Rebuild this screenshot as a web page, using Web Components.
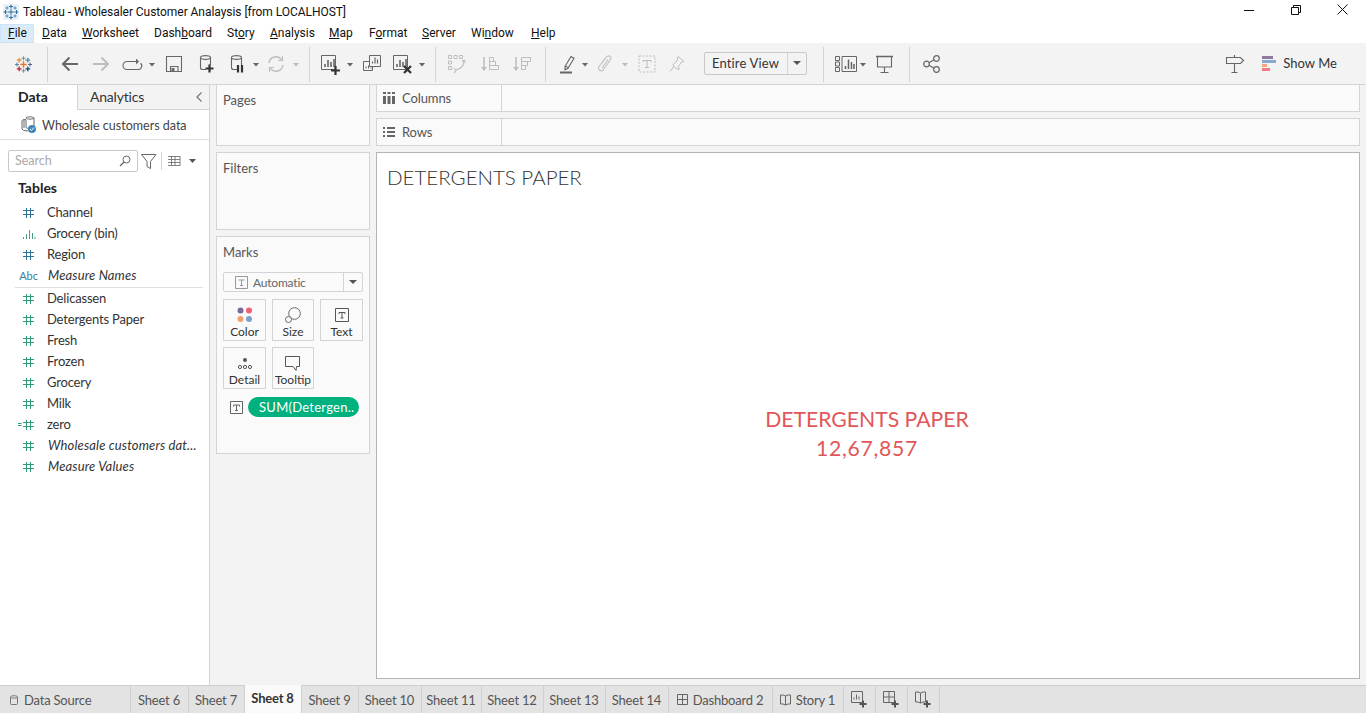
<!DOCTYPE html>
<html><head><meta charset="utf-8"><style>
html,body{margin:0;padding:0;height:100%;overflow:hidden;background:#fff}
body{font-family:"Lato","Open Sans",sans-serif;color:#333}
</style></head><body>
<tableau-app></tableau-app>
<script>
const G='#666', L='#bdbdbd';
const cyl=(c=G)=>`<path d="M1.500 3.500C1.500 1 11.500 1 11.500 3.500V11M1.500 3.500C1.500 6 11.500 6 11.500 3.500M1.500 3.500V13.500Q1.500 15.500 3.500 15.500H7" fill="none" stroke="${c}" stroke-width="1.100"/>`;
const chartBox=(x,y,w,h,c=G)=>`<path d="M${x+.5} ${y+.5}h${w-1}v${h-1}h-${w-1}z" fill="none" stroke="${c}"/><path d="M${x+4} ${y+h-3}v-3M${x+7} ${y+h-3}v-7M${x+10} ${y+h-3}v-5M${x+13} ${y+h-3}v-8" stroke="${c}" stroke-width="1.600" fill="none"/>`;
const lp=(x,y,s,c,w=1.1)=>`<path d="M${x-s} ${y}h${2*s}M${x} ${y-s}v${2*s}" stroke="${c}" fill="none" stroke-width="${w}"/>`;
const ICONS={
 logo:[17,17,lp(8.5,8.5,3.2,'#e8762b',1.4)+lp(8.5,2.2,2,'#7099a6')+lp(8.5,14.8,2,'#7099a6')+lp(2,8.5,2,'#59879b')+lp(15,8.5,2,'#5b6591')+lp(4.2,4.2,2.4,'#eb9129',1.3)+lp(12.8,4.2,2.4,'#59879b',1.3)+lp(4.2,12.8,2.4,'#c72037',1.3)+lp(12.8,12.800,2.4,'#1f447b',1.3)],
 snow:[16,16,`<rect width="16" height="16" fill="#eaf2f8"/>`+lp(8,8,3,'#2a6c9e',1)+lp(8,2.5,2,'#2a6c9e',1)+lp(8,13.5,2,'#2a6c9e',1)+lp(2.5,8,2,'#2a6c9e',1)+lp(13.5,8,2,'#2a6c9e',1)+lp(4,4,1.6,'#4a8cbe',1)+lp(12,4,1.6,'#4a8cbe',1)+lp(4,12,1.6,'#4a8cbe',1)+lp(12,12,1.6,'#4a8cbe',1)],
 back:[18,16,`<path d="M17 8H2M8.500 1.500L2 8l6.500 6.500" fill="none" stroke="${G}" stroke-width="2"/>`],
 fwd:[18,16,`<path d="M1 8H16M9.500 1.500L16 8l-6.500 6.500" fill="none" stroke="${L}" stroke-width="2"/>`],
 loop:[19,12,`<path d="M13 3.500H4a4 4 0 0 0 0 8h11a3.500 3.500 0 0 0 2.500-6.200" fill="none" stroke="${G}" stroke-width="1.100"/><path d="M13 .5l3 3-3 3z" fill="${G}"/>`],
 save:[16,16,`<path d="M.5 .5h15v15H.5z" fill="none" stroke="${G}" stroke-width="1.100"/><path d="M4.500 15.500v-5h7.500v5" fill="none" stroke="${G}" stroke-width="1.100"/><path d="M5.500 12h3v3h-3z" fill="${G}"/>`],
 dsadd:[15,20,cyl()+`<path d="M6.500 14.500H14.500M10.500 10.500V18.500" stroke="#333" stroke-width="2.200" fill="none"/>`],
 dspause:[15,20,cyl()+`<path d="M8 11v7.500M12 11v7.500" stroke="#333" stroke-width="2.200" fill="none"/>`],
 refresh:[18,18,`<path d="M2 8a7 7 0 0 1 12.500-3.500M16 10a7 7 0 0 1-12.500 3.500" fill="none" stroke="${L}" stroke-width="1.400"/><path d="M15.500 1v4.500H11M2.500 17v-4.500H7" fill="none" stroke="${L}" stroke-width="1.200"/>`],
 chartadd:[22,22,chartBox(1,2,15,15)+`<path d="M11 17.500h9M15.500 13v9" stroke="#333" stroke-width="2.200" fill="none"/>`],
 dup:[20,20,`<path d="M7.500 1.500h11v11h-11z" fill="#f3f3f3" stroke="${G}"/><path d="M10.500 9.500v-2M13 9.500v-6M15.500 9.500v-4" stroke="${G}" stroke-width="1.200"/><path d="M1.500 7.500h6M1.500 7.500v9h9v-4" fill="none" stroke="${G}"/><path d="M4 14.500v-2M6.500 14.500v-3M9 14.500v-1" stroke="${G}"/>`],
 clear:[22,22,chartBox(1,2,15,15)+`<path d="M12 13l7 7M19 13l-7 7" stroke="#333" stroke-width="2.200" fill="none"/>`],
 swap:[20,20,`<path d="M1.500 1.500h3v3h-3zM7 1.500h3v3H7zM12.500 1.500h3v3h-3zM1.500 7h3v3h-3zM1.500 12.500h3v3h-3z" fill="none" stroke="${L}"/><path d="M17 6q1 7-8 10M7 14l2 2.500-2 2.500M18.500 8l-1.500-2-2 1.500" fill="none" stroke="${L}" stroke-width="1.200"/>`],
 sorta:[20,20,`<path d="M4 3v13" stroke="${L}" stroke-width="1.500"/><path d="M1 13h6l-3 4z" fill="${L}"/><path d="M9.500 3.500h4v4h-4zM9.500 7.500h6v4h-6zM9.500 11.500h9v4h-9z" fill="none" stroke="${L}"/>`],
 sortd:[20,20,`<path d="M4 3v13" stroke="${L}" stroke-width="1.500"/><path d="M1 13h6l-3 4z" fill="${L}"/><path d="M9.500 3.500h9v4h-9zM9.500 7.500h6v4h-6zM9.500 11.500h4v4h-4z" fill="none" stroke="${L}"/>`],
 pen:[18,20,`<path d="M6 12.500L12 2.500l3 1.800-6 10-3 1.500zM6.500 12l2.600 1.600" fill="none" stroke="${G}" stroke-width="1.100"/><rect x="1" y="17.500" width="12" height="2" fill="${G}"/>`],
 clip:[18,20,`<path d="M5.500 9.500L10.500 3a2.300 2.300 0 0 1 4 2.500L7.500 15.500a2.700 2.700 0 0 1-4.500-3L9 4.500M6 14l6-8.500" fill="none" stroke="${L}" stroke-width="1.100"/>`],
 tdash:[18,18,`<path d="M1 1h16v16H1z" fill="none" stroke="${L}" stroke-dasharray="2 1.500"/><path d="M5 5.500h8M9 5.500v7M7 12.500h4M5 5.500v1.500M13 5.500v1.500" fill="none" stroke="${L}"/>`],
 pin:[18,18,`<path d="M10 1.500l6 5-2.500.500-3 4.500.500 3-2.500-.500-3-3L5 9.500l4-3.500z" fill="none" stroke="${L}"/><path d="M6 11.500l-4 5" stroke="${L}"/>`],
 sm:[22,18,`<path d="M.5 1.500h4v4h-4zM.5 7h4v4h-4zM.5 12.500h4v4h-4zM7 1.500h14.500v15H7z" fill="none" stroke="${G}"/><path d="M10.500 14v-3M13.500 14V4.500M16.500 14V7M19 14v-5" stroke="${G}" stroke-width="1.500"/>`],
 present:[18,18,`<path d="M0 1.500h17" stroke="${G}" stroke-width="1.500"/><path d="M1.500 1.500v10.500h14V1.500M8.500 12v5M4.500 17.500h8" fill="none" stroke="${G}" stroke-width="1.100"/>`],
 share:[18,18,`<circle cx="3.500" cy="9" r="2.800" fill="none" stroke="${G}" stroke-width="1.200"/><circle cx="13.500" cy="3.500" r="2.800" fill="none" stroke="${G}" stroke-width="1.200"/><circle cx="13.500" cy="14.500" r="2.800" fill="none" stroke="${G}" stroke-width="1.200"/><path d="M6 7.700l5-3M6 10.300l5 3" stroke="${G}" stroke-width="1.200"/>`],
 sign:[20,20,`<path d="M1.500 3.500H15.500L18.500 6.500 15.500 9.500H1.500zM9.500 1v2.500M9.500 9.500V18M6.500 18.500h6" fill="none" stroke="${G}" stroke-width="1.100"/>`],
 showme:[14,16,`<rect x="0" y="0" width="11" height="3" fill="#8e7ba0"/><rect x="0" y="4" width="14" height="3" fill="#88a8d0"/><rect x="0" y="8" width="5" height="3" fill="#f0a878"/><rect x="0" y="12" width="8" height="3" fill="#f57a85"/>`],
 min:[12,12,`<path d="M0 6.500h10" stroke="#111"/>`],
 max:[12,12,`<path d="M.5 3.500h7v7h-7zM2.500 3.500v-2h7v7h-2" fill="none" stroke="#111"/>`],
 close:[12,12,`<path d="M.5 .5l10 10M10.500 .5l-10 10" stroke="#111" fill="none"/>`],
 hash:[12,12,`<path d="M3.500 1v10M7.500 1v10M0 3.500h11M0 7.500h11" stroke="var(--c,#3a7d9c)" fill="none"/>`],
 hash2:[17,12,`<path d="M8.500 1v10M12.500 1v10M5 3.500h11M5 7.500h11M0 4.500h3.500M0 6.500h3.500" stroke="var(--c,#3a9d7c)" fill="none"/>`],
 bin:[14,12,`<path d="M1.500 9v2M4.500 6v5M7.500 2v9M10.500 5v6M13 9v2" stroke="#46a07e" fill="none"/>`],
 search:[12,12,`<circle cx="7.500" cy="4.500" r="3.500" fill="none" stroke="${G}"/><path d="M5 7L1 11" stroke="${G}" stroke-width="1.300"/>`],
 filter:[16,15,`<path d="M.5 .5h14.500L9.500 7.500v7l-3.500-2V7.500z" fill="none" stroke="${G}"/>`],
 cols:[12,12,`<path d="M0 0h3v2H0zM4.500 0h3v2h-3zM9 0h3v2H9zM0 4h3v8H0zM4.500 4h3v8h-3zM9 4h3v8H9z" fill="#666"/>`],
 rows:[12,10,`<path d="M0 0h2v2H0zM0 4h2v2H0zM0 8h2v2H0zM4 0h8v2H4zM4 4h8v2H4zM4 8h8v2H4z" fill="#666"/>`],
 list:[12,10,`<path d="M0 .5h12M0 3.500h12M0 6.500h12M0 9.500h12M3.500 0v10M7 0v10M12 0v10" stroke="${G}" fill="none" stroke-width=".8"/>`],
 ds:[18,18,`<path d="M7 2c0-1.500 8-1.500 8 0v8M7 2c0 1.500 8 1.500 8 0" fill="none" stroke="${G}"/><path d="M3 5v8q0 2 6 2M3 5c0-1 2-1.500 4-1.500M5 3v9" fill="none" stroke="${G}"/><path d="M7 4v7q0 2 6 1" fill="none" stroke="${G}"/><circle cx="13" cy="13" r="4" fill="#3f87b8"/><path d="M11 13l1.500 1.500L15 11.500" stroke="#fff" fill="none"/>`],
 t:[13,13,`<path d="M.5 .5h12v12H.5z" fill="none" stroke="${G}"/><path d="M3.500 4h6M6.500 4v5.500M5 9.500h3M3.500 4v1.500M9.500 4v1.500" fill="none" stroke="${G}"/>`],
 tlight:[13,13,`<path d="M.5 .5h12v12H.5z" fill="none" stroke="#999"/><path d="M3.500 4h6M6.500 4v5.500M5 9.500h3" fill="none" stroke="#999"/>`],
 color:[16,16,`<circle cx="3.500" cy="3.500" r="3" fill="#7d6a96"/><circle cx="12" cy="3.500" r="3" fill="#ef5f75"/><circle cx="3.500" cy="12" r="3" fill="#f0a070"/><circle cx="12" cy="12" r="3" fill="#7aa0cc"/>`],
 size:[16,16,`<circle cx="9.500" cy="6.500" r="5.800" fill="#fafafa" stroke="${G}"/><circle cx="3.500" cy="12.500" r="3" fill="#fafafa" stroke="${G}"/>`],
 text:[14,14,`<path d="M.5 .5h13v13H.5z" fill="none" stroke="#555"/><path d="M4 4.500h6M7 4.500V10M5.500 10h3M4 4.500V6M10 4.500V6" fill="none" stroke="#555"/>`],
 detail:[14,14,`<circle cx="7" cy="4" r="2" fill="#555"/><circle cx="2" cy="11" r="1.600" fill="none" stroke="#555"/><circle cx="7" cy="11" r="1.600" fill="none" stroke="#555"/><circle cx="12" cy="11" r="1.600" fill="none" stroke="#555"/>`],
 tip:[16,15,`<path d="M.5 .5h14v10h-3l-.5 4-3-4H.5z" fill="none" stroke="#555"/>`],
 cyl:[8,10,`<path d="M.5 2C.5 .3 7.500 .3 7.500 2V8.500q0 1-1 1h-5q-1 0-1-1zM.5 2C.5 3.500 7.500 3.500 7.500 2" fill="none" stroke="#777"/>`],
 dash:[11,11,`<path d="M.5 .5h10v10H.5zM5.500 .5v10M.5 5.500h10" fill="none" stroke="#666"/>`],
 book:[11,11,`<path d="M5.500 2Q3 .5 .5 1v9q2.500-.500 5 1 2.500-1.500 5-1V1Q8 .5 5.500 2zM5.500 2v9" fill="none" stroke="#666"/>`],
 newsheet:[16,17,`<path d="M.5 .5h11v11H.5z" fill="none" stroke="#666"/><path d="M3 8.500V6.500M5.500 8.500v-5M8 8.500v-3" stroke="#666"/><path d="M8.500 13h7M12 9.500v7" stroke="#555" stroke-width="2" fill="none"/>`],
 newdash:[16,17,`<path d="M.5 .5h11v11H.5zM6 .5v11M.5 6h11" fill="none" stroke="#666"/><path d="M8.500 13h7M12 9.500v7" stroke="#555" stroke-width="2" fill="none"/>`],
 newstory:[16,17,`<path d="M5.500 2Q3 .5 .5 1v10q2.500-.500 5 1 2.500-1.500 5-1V1Q8 .5 5.500 2zM5.500 2v10" fill="none" stroke="#666"/><path d="M8.500 13h7M12 9.500v7" stroke="#555" stroke-width="2" fill="none"/>`],
};
class TIcon extends HTMLElement{
 connectedCallback(){
  const [w,h,b]=ICONS[this.getAttribute('n')];
  const r=this.shadowRoot||this.attachShadow({mode:'open'});
  r.innerHTML=`<style>:host{display:inline-flex;flex:none;line-height:0}svg{display:block;overflow:visible}</style><svg width="${w}" height="${h}" viewBox="0 0 ${w} ${h}">${b}</svg>`;
 }
}
customElements.define('t-icon',TIcon);
function def(name,css,html){
 customElements.define(name,class extends HTMLElement{constructor(){super();this.attachShadow({mode:'open'}).innerHTML=`<style>${css}</style>${typeof html==='function'?html(this):html}`}});
}
def('app-titlebar',`:host{display:flex;align-items:center;height:24px;background:#fff;font:12px/24px Roboto,sans-serif;color:#111}
t-icon{margin:0 4px 0 3px}.t{flex:1;white-space:nowrap;letter-spacing:-.05px}.b{display:flex}.b span{width:46px;display:flex;justify-content:center;align-items:center;height:20px;margin-top:-4px}`,
`<t-icon n="snow"></t-icon><div class="t">Tableau - Wholesaler Customer Analaysis [from LOCALHOST]</div><div class="b"><span style="margin-right:1px"><t-icon n="min"></t-icon></span><span><t-icon n="max"></t-icon></span><span><t-icon n="close"></t-icon></span></div>`);
const menus=[['File','F',34],['Data','D',40],['Worksheet','W',72],['Dashboard','b',73],['Story','o',43],['Analysis','A',59],['Map','M',40],['Format','o',53],['Server','S',49],['Window','n',60],['Help','H',38]];
def('app-menubar',`:host{display:flex;height:19px;background:#fff;font:12px/19px Roboto,sans-serif;color:#111}
div{padding-left:8px;box-sizing:border-box;white-space:nowrap}.on{background:#d9ebf9;box-shadow:inset 0 0 0 1px #cce4f7}u{text-underline-offset:1px}`,
menus.map((m,i)=>{const s=m[0];const k=s.indexOf(m[1]);return `<div class="${i==0?'on':''}" style="width:${m[2]}px">${s.slice(0,k)}<u>${s[k]}</u>${s.slice(k+1)}</div>`}).join(''));
const bar=[['i','logo',23],['s',47],['i','back',70],['i','fwd',101],['i','loop',132],['c',152],['i','save',174],['i','dsadd',206],['i','dspause',237],['c',256],['i','refresh',276],['cl',296],['s',309],['i','chartadd',331],['c',350],['i','dup',372],['i','clear',403],['c',422],['s',435],['i','swap',457],['i','sorta',490],['i','sortd',522],['s',545],['i','pen',568],['c',585],['i','clip',605],['cl',625],['i','tdash',647],['i','pin',677],['f'],['s',823],['i','sm',846],['c',863],['i','present',885],['s',909],['i','share',932]];
let cx=0;
const barHtml=bar.map(b=>{
 if(b[0]==='f'){const h=`<tb-select style="margin-left:${704-cx}px">Entire View</tb-select>`;cx=807;return h}
 const kind=b[0],c=b[b.length-1];
 const w=kind==='i'?(ICONS[b[1]][0]):kind==='s'?1:7;
 const l=c-w/2;const m=l-cx;cx=l+w;
 if(kind==='i')return `<t-icon n="${b[1]}" style="margin-left:${m}px"></t-icon>`;
 if(kind==='s')return `<i class="sep" style="margin-left:${m}px"></i>`;
 return `<i class="car${kind==='cl'?' l':''}" style="margin-left:${m}px"></i>`;
}).join('');
const caret=`background:#555;clip-path:polygon(0 0,100% 0,50% 100%);flex:none;`;
def('tb-select',`:host{display:flex;flex:none;width:103px;height:23px;box-sizing:border-box;border:1px solid #c8c8c8;border-radius:2px;font:13px/21px Lato,sans-serif;color:#333;letter-spacing:.15px;margin-top:-2px}
.a{flex:1;padding-left:7px}.b{width:18px;border-left:1px solid #d4d4d4;display:flex;align-items:center;justify-content:center}.b i{width:8px;height:4px;${caret}}`,`<div class="a"><slot></slot></div><div class="b"><i></i></div>`);
def('app-toolbar',`:host{display:flex;align-items:center;height:41px;background:#f3f3f3;box-sizing:border-box;padding-top:1px;font:13px Lato,sans-serif;color:#333}
.sep{width:1px;height:35px;background:#d4d4d4;flex:none}.car{width:7px;height:4px;${caret}background:#666;margin-top:1px}.car.l{background:#bbb}.end{margin-left:auto;display:flex;align-items:center}
.sm{margin:-2px 29px 0 7px;font-size:13px;letter-spacing:.05px}`,
barHtml+`<div class="end"><t-icon n="sign"></t-icon><t-icon n="showme" style="margin-left:17px"></t-icon><span class="sm">Show Me</span></div>`);
def('side-tabs',`:host{display:flex;height:25px;font:14px/23px Lato,sans-serif;color:#333;box-sizing:border-box}
.d{width:77px;font-weight:700;padding-left:18px;box-sizing:border-box;background:#fff;color:#222}
.a{flex:1;background:#f3f3f3;border-left:1px solid #d4d4d4;border-bottom:1px solid #d4d4d4;padding-left:12px;display:flex;justify-content:space-between;height:25px;box-sizing:border-box;letter-spacing:-.2px}
svg{margin:7px 6px 0 0}`,`<div class="d">Data</div><div class="a"><span>Analytics</span><svg width="8" height="10"><path d="M6.500 .5L2 5l4.500 4.500" fill="none" stroke="#777" stroke-width="1.200"/></svg></div>`);
def('field-row',`:host{display:flex;align-items:center;height:21px;font:13px/21px Lato,sans-serif;color:#333;white-space:nowrap;letter-spacing:-.18px}
.i{width:47px;display:flex;justify-content:flex-end;box-sizing:border-box;padding-right:12px;flex:none}
.abc{font:11px Lato,sans-serif;color:#3a7d9c;margin-right:-3px;letter-spacing:0}:host([it]) .l{font-style:italic;letter-spacing:.15px;padding-left:1px}`,t=>{
 const k=t.getAttribute('k'),c=k==='dim'?'#2f7396':'#2f9a78';
 return `<div class="i" style="--c:${c}">${k==='abc'?'<span class="abc">Abc</span>':k==='bin'?'<t-icon n="bin" style="margin-right:-1px"></t-icon>':k==='calc'?'<t-icon n="hash2"></t-icon>':'<t-icon n="hash"></t-icon>'}</div><div class="l"><slot></slot></div>`});
def('data-pane',`:host{display:flex;flex-direction:column;width:210px;flex:none;background:#fff;box-sizing:border-box;border-right:1px solid #d4d4d4;font-family:Lato,sans-serif}
.ds{height:29px;display:flex;align-items:center;border-bottom:1px solid #e0e0e0;font-size:12.500px;color:#444;padding-left:19px;gap:5px;white-space:nowrap}.ds span{padding-top:1px}
.sr{display:flex;align-items:center;padding:10px 0 0 8px;height:22px}
.box{width:130px;height:22px;box-sizing:border-box;border:1px solid #c8c8c8;border-radius:2px;display:flex;align-items:center;justify-content:space-between;padding:0 6px 1px;font-size:12.500px;color:#aaa}
.v{width:1px;height:18px;background:#d4d4d4;margin:0 6px 0 4px}h4{margin:6px 0 4px 18px;font:700 14px/20px Lato,sans-serif;color:#222}
hr{border:0;border-top:1px solid #e0e0e0;margin:1px 6px 0 15px;height:0}.tc{width:7px;height:4px;${caret}margin-left:9px}`,
`<side-tabs></side-tabs><div class="ds"><t-icon n="ds"></t-icon><span>Wholesale customers data</span></div>
<div class="sr"><div class="box"><span>Search</span><t-icon n="search"></t-icon></div><t-icon n="filter" style="margin-left:3px"></t-icon><i class="v"></i><t-icon n="list"></t-icon><i class="tc"></i></div>
<h4>Tables</h4>
<field-row k="dim">Channel</field-row><field-row k="bin">Grocery (bin)</field-row><field-row k="dim">Region</field-row><field-row k="abc" it>Measure Names</field-row>
<hr>
<field-row>Delicassen</field-row><field-row>Detergents Paper</field-row><field-row>Fresh</field-row><field-row>Frozen</field-row><field-row>Grocery</field-row><field-row>Milk</field-row><field-row k="calc">zero</field-row><field-row it>Wholesale customers dat...</field-row><field-row it>Measure Values</field-row>`);
def('side-card',`:host{display:block;box-sizing:border-box;background:#fafafa;border:1px solid #d4d4d4;font:13px/18px Lato,sans-serif;color:#555;padding:6px}
.t{height:20px}`,`<div class="t"><slot name="t"></slot></div><slot></slot>`);
def('mark-btn',`:host{display:flex;flex-direction:column;align-items:center;box-sizing:border-box;height:42px;border:1px solid #d4d4d4;font:12px/14px Lato,sans-serif;color:#333;padding-top:5px}
.i{height:20px;display:flex;align-items:center}`,`<div class="i"><slot name="i"></slot></div><slot></slot>`);
def('marks-body',`:host{display:block;font:12px Lato,sans-serif;color:#555}
.sel{display:flex;height:20px;box-sizing:border-box;border:1px solid #d4d4d4;border-radius:2px;margin:9px 0 7px}
.sel .a{flex:1;display:flex;align-items:center;padding-left:11px;gap:5px;color:#666;letter-spacing:-.2px}.sel .b{width:18px;border-left:1px solid #d4d4d4;display:flex;align-items:center;justify-content:center}
.sel i{width:8px;height:4px;${caret}}
.g{display:grid;grid-template-columns:43px 42px 43px;gap:6px;justify-content:space-between}
.p{display:flex;align-items:center;margin:8px 0 0 7px;gap:5px}.pill{flex:1;height:20px;background:#00b180;border-radius:10px;color:#fff;font:13px/20px Lato,sans-serif;padding-left:11px;letter-spacing:.02em;margin-right:4px;white-space:nowrap}`,
`<div class="sel"><div class="a"><t-icon n="tlight"></t-icon><span>Automatic</span></div><div class="b"><i></i></div></div>
<div class="g"><mark-btn><t-icon slot="i" n="color"></t-icon>Color</mark-btn><mark-btn><t-icon slot="i" n="size"></t-icon>Size</mark-btn><mark-btn><t-icon slot="i" n="text"></t-icon>Text</mark-btn><mark-btn><t-icon slot="i" n="detail"></t-icon>Detail</mark-btn><mark-btn><t-icon slot="i" n="tip"></t-icon>Tooltip</mark-btn></div>
<div class="p"><t-icon n="t"></t-icon><div class="pill">SUM(Detergen..</div></div>`);
def('shelf-row',`:host{display:flex;height:28px;box-sizing:border-box;border:1px solid #d4d4d4;background:#fafafa;font:13px/26px Lato,sans-serif;color:#555;letter-spacing:-.1px}
.l{width:125px;box-sizing:border-box;border-right:1px solid #d4d4d4;display:flex;align-items:center;gap:7px;padding-left:6px}`,`<div class="l"><slot name="i"></slot><slot></slot></div>`);
def('view-canvas',`:host{display:flex;flex-direction:column;flex:1;background:#fff;border:1px solid #b4b4b4;box-sizing:border-box;font-family:Lato,sans-serif}
.t{font:300 20.500px/24px Lato,sans-serif;color:#333;padding:12px 0 7px 10px}.c{flex:1;display:flex;flex-direction:column;align-items:center;justify-content:center;color:#e15759;font:400 21.200px/29px Lato,sans-serif;padding:0 2px 6px 0}.n{letter-spacing:.7px}`,
`<div class="t">DETERGENTS PAPER</div><div class="c"><div>DETERGENTS PAPER</div><div class="n">12,67,857</div></div>`);
const tabs=[['Sheet 6',58],['Sheet 7',56],['Sheet 8',57,1],['Sheet 9',57],['Sheet 10',63],['Sheet 11',60],['Sheet 12',62],['Sheet 13',62],['Sheet 14',63],['Dashboard 2',104,0,'dash'],['Story 1',71,0,'book']];
def('sheet-tabs',`:host{display:flex;height:28px;background:#e3e3e3;font:13px/28px Lato,sans-serif;color:#555;white-space:nowrap;letter-spacing:-.2px}
div{box-sizing:border-box;background:#e3e3e3;border-right:1px solid #cfcfcf;border-top:1px solid #cfcfcf;display:flex;align-items:center;justify-content:center;gap:5px;flex:none;padding-right:1px}
.on{background:#fafafa;font-weight:700;border-top:0;color:#333;padding-bottom:3px}.ds{width:131px;justify-content:flex-start;padding-left:10px;gap:6px}.n{width:32px}.rest{flex:1;border-right:0}`,
`<div class="ds"><t-icon n="cyl"></t-icon>Data Source</div>`+tabs.map(t=>`<div class="${t[2]?'on':''}" style="width:${t[1]}px">${t[3]?`<t-icon n="${t[3]}"></t-icon>`:''}${t[0]}</div>`).join('')+`<div class="n"><t-icon n="newsheet"></t-icon></div><div class="n"><t-icon n="newdash"></t-icon></div><div class="n"><t-icon n="newstory"></t-icon></div><div class="rest"></div>`);
def('tableau-app',`:host{display:flex;flex-direction:column;height:713px;width:1366px;overflow:hidden}
.m{display:flex;flex:1;background:#f3f3f3;min-height:0;border-top:1px solid #d4d4d4}
.cards{width:154px;flex:none;margin:-1px 6px 0;display:flex;flex-direction:column;gap:6px}
.r{flex:1;display:flex;flex-direction:column;gap:6px;margin:-1px 6px 0 0;padding-bottom:6px;min-width:0}
.c1{height:62px;flex:none}.c2{height:78px;flex:none}.c3{height:218px;flex:none}`,
`<app-titlebar></app-titlebar><app-menubar></app-menubar><app-toolbar></app-toolbar>
<div class="m"><data-pane></data-pane>
<div class="cards"><side-card class="c1"><span slot="t">Pages</span></side-card><side-card class="c2"><span slot="t">Filters</span></side-card><side-card class="c3"><span slot="t">Marks</span><marks-body></marks-body></side-card></div>
<div class="r"><shelf-row><t-icon slot="i" n="cols"></t-icon>Columns</shelf-row><shelf-row><t-icon slot="i" n="rows"></t-icon>Rows</shelf-row><view-canvas></view-canvas></div></div>
<sheet-tabs></sheet-tabs>`);
</script></body></html>
